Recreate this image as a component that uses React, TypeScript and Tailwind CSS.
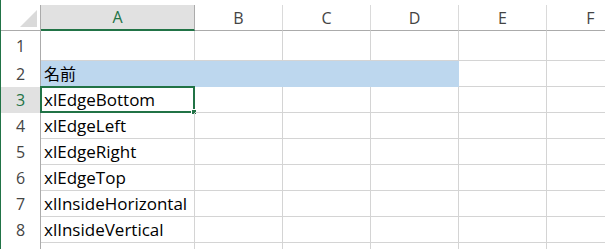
const cols = [
  { name: 'A', w: 'w-[154px]' },
  { name: 'B', w: 'w-[88px]' },
  { name: 'C', w: 'w-[88px]' },
  { name: 'D', w: 'w-[88px]' },
  { name: 'E', w: 'w-[88px]' },
  { name: 'F', w: 'w-[88px]' },
];

const rows = [
  { n: 1, h: 'h-[30px]', text: '' },
  { n: 2, h: 'h-[26px]', text: '名前' },
  { n: 3, h: 'h-[26px]', text: 'xlEdgeBottom' },
  { n: 4, h: 'h-[26px]', text: 'xlEdgeLeft' },
  { n: 5, h: 'h-[26px]', text: 'xlEdgeRight' },
  { n: 6, h: 'h-[26px]', text: 'xlEdgeTop' },
  { n: 7, h: 'h-[26px]', text: 'xlInsideHorizontal' },
  { n: 8, h: 'h-[26px]', text: 'xlInsideVertical' },
  { n: 9, h: 'h-[26px]', text: '' },
];

export default function App() {
  return (
    <div className="w-[605px] h-[249px] overflow-hidden bg-white flex font-['Open_Sans','Noto_Sans_CJK_JP',sans-serif]">
      {/* window edge */}
      <div className="w-px shrink-0 bg-[#217346]" />

      <div className="flex flex-col pt-[5px]">
        {/* column headers */}
        <div className="flex h-[26px] shrink-0">
          <div className="w-[40px] shrink-0 border-r border-b border-[#ababab] relative">
            <svg className="absolute right-[3px] bottom-[3px]" width="17" height="17" viewBox="0 0 17 17">
              <polygon points="0,17 17,17 17,0" fill="#dadada" />
            </svg>
          </div>
          {cols.map((c) => (
            <div
              key={c.name}
              className={`${c.w} shrink-0 flex items-center justify-center text-[16px] border-r ${
                c.name === 'A'
                  ? 'bg-[#e1e1e1] text-[#217346] border-[#ababab] border-b-2 border-b-[#217346]'
                  : 'text-[#444444] border-[#dadada] border-b border-b-[#ababab]'
              }`}
            >
              {c.name}
            </div>
          ))}
        </div>

        {/* rows */}
        {rows.map((r) => (
          <div key={r.n} className={`flex ${r.h} shrink-0`}>
            <div
              className={`w-[40px] shrink-0 border-r border-[#ababab] flex items-center justify-center text-[16px] ${
                r.n === 3 ? 'bg-[#e1e1e1] text-[#217346]' : 'text-[#444444]'
              }`}
            >
              {r.n}
            </div>
            {cols.map((c, i) => {
              const filled = r.n === 2 && i < 4;
              return (
                <div
                  key={c.name}
                  className={`${c.w} shrink-0 relative border-b border-r ${
                    filled ? 'bg-[#bdd7ee] border-[#bdd7ee]' : 'border-[#d4d4d4]'
                  } flex items-center pl-[3px] ${r.n === 2 ? 'text-[16px]' : 'text-[17px]'} text-black whitespace-nowrap`}
                >
                  {i === 0 ? r.text : ''}
                  {i === 0 && r.n === 3 && (
                    <div className="absolute -left-px -top-px -right-px -bottom-px border-2 border-[#217346]">
                      <div className="absolute -right-[4px] -bottom-[4px] w-[6px] h-[6px] bg-[#217346] border border-white" />
                    </div>
                  )}
                </div>
              );
            })}
          </div>
        ))}
      </div>
    </div>
  );
}
